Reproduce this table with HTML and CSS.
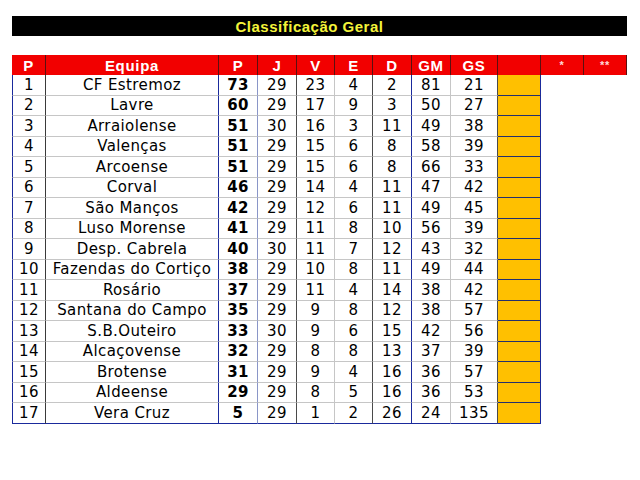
FILE: index.html
```html
<!DOCTYPE html>
<html lang="pt">
<head>
<meta charset="utf-8">
<title>Classificação Geral</title>
<link rel="stylesheet" href="styles.css">
</head>
<body>
<div class="page">
  <div class="title"><span>Classificação Geral</span></div>
  <div class="standings">
    <div class="row head">
      <div class="c">P</div><div class="c">Equipa</div><div class="c">P</div><div class="c">J</div><div class="c">V</div><div class="c">E</div><div class="c">D</div><div class="c">GM</div><div class="c">GS</div><div class="c"></div><div class="c star">*</div><div class="c star">**</div>
    </div>
    <div class="row"><div class="c">1</div><div class="c">CF Estremoz</div><div class="c pts">73</div><div class="c">29</div><div class="c">23</div><div class="c">4</div><div class="c">2</div><div class="c">81</div><div class="c">21</div><div class="c hl"></div><div class="c e"></div><div class="c e"></div></div>
    <div class="row"><div class="c">2</div><div class="c">Lavre</div><div class="c pts">60</div><div class="c">29</div><div class="c">17</div><div class="c">9</div><div class="c">3</div><div class="c">50</div><div class="c">27</div><div class="c hl"></div><div class="c e"></div><div class="c e"></div></div>
    <div class="row"><div class="c">3</div><div class="c">Arraiolense</div><div class="c pts">51</div><div class="c">30</div><div class="c">16</div><div class="c">3</div><div class="c">11</div><div class="c">49</div><div class="c">38</div><div class="c hl"></div><div class="c e"></div><div class="c e"></div></div>
    <div class="row"><div class="c">4</div><div class="c">Valenças</div><div class="c pts">51</div><div class="c">29</div><div class="c">15</div><div class="c">6</div><div class="c">8</div><div class="c">58</div><div class="c">39</div><div class="c hl"></div><div class="c e"></div><div class="c e"></div></div>
    <div class="row"><div class="c">5</div><div class="c">Arcoense</div><div class="c pts">51</div><div class="c">29</div><div class="c">15</div><div class="c">6</div><div class="c">8</div><div class="c">66</div><div class="c">33</div><div class="c hl"></div><div class="c e"></div><div class="c e"></div></div>
    <div class="row"><div class="c">6</div><div class="c">Corval</div><div class="c pts">46</div><div class="c">29</div><div class="c">14</div><div class="c">4</div><div class="c">11</div><div class="c">47</div><div class="c">42</div><div class="c hl"></div><div class="c e"></div><div class="c e"></div></div>
    <div class="row"><div class="c">7</div><div class="c">São Manços</div><div class="c pts">42</div><div class="c">29</div><div class="c">12</div><div class="c">6</div><div class="c">11</div><div class="c">49</div><div class="c">45</div><div class="c hl"></div><div class="c e"></div><div class="c e"></div></div>
    <div class="row"><div class="c">8</div><div class="c">Luso Morense</div><div class="c pts">41</div><div class="c">29</div><div class="c">11</div><div class="c">8</div><div class="c">10</div><div class="c">56</div><div class="c">39</div><div class="c hl"></div><div class="c e"></div><div class="c e"></div></div>
    <div class="row"><div class="c">9</div><div class="c">Desp. Cabrela</div><div class="c pts">40</div><div class="c">30</div><div class="c">11</div><div class="c">7</div><div class="c">12</div><div class="c">43</div><div class="c">32</div><div class="c hl"></div><div class="c e"></div><div class="c e"></div></div>
    <div class="row"><div class="c">10</div><div class="c">Fazendas do Cortiço</div><div class="c pts">38</div><div class="c">29</div><div class="c">10</div><div class="c">8</div><div class="c">11</div><div class="c">49</div><div class="c">44</div><div class="c hl"></div><div class="c e"></div><div class="c e"></div></div>
    <div class="row"><div class="c">11</div><div class="c">Rosário</div><div class="c pts">37</div><div class="c">29</div><div class="c">11</div><div class="c">4</div><div class="c">14</div><div class="c">38</div><div class="c">42</div><div class="c hl"></div><div class="c e"></div><div class="c e"></div></div>
    <div class="row"><div class="c">12</div><div class="c">Santana do Campo</div><div class="c pts">35</div><div class="c">29</div><div class="c">9</div><div class="c">8</div><div class="c">12</div><div class="c">38</div><div class="c">57</div><div class="c hl"></div><div class="c e"></div><div class="c e"></div></div>
    <div class="row"><div class="c">13</div><div class="c">S.B.Outeiro</div><div class="c pts">33</div><div class="c">30</div><div class="c">9</div><div class="c">6</div><div class="c">15</div><div class="c">42</div><div class="c">56</div><div class="c hl"></div><div class="c e"></div><div class="c e"></div></div>
    <div class="row"><div class="c">14</div><div class="c">Alcaçovense</div><div class="c pts">32</div><div class="c">29</div><div class="c">8</div><div class="c">8</div><div class="c">13</div><div class="c">37</div><div class="c">39</div><div class="c hl"></div><div class="c e"></div><div class="c e"></div></div>
    <div class="row"><div class="c">15</div><div class="c">Brotense</div><div class="c pts">31</div><div class="c">29</div><div class="c">9</div><div class="c">4</div><div class="c">16</div><div class="c">36</div><div class="c">57</div><div class="c hl"></div><div class="c e"></div><div class="c e"></div></div>
    <div class="row"><div class="c">16</div><div class="c">Aldeense</div><div class="c pts">29</div><div class="c">29</div><div class="c">8</div><div class="c">5</div><div class="c">16</div><div class="c">36</div><div class="c">53</div><div class="c hl"></div><div class="c e"></div><div class="c e"></div></div>
    <div class="row last"><div class="c">17</div><div class="c">Vera Cruz</div><div class="c pts">5</div><div class="c">29</div><div class="c">1</div><div class="c">2</div><div class="c">26</div><div class="c">24</div><div class="c">135</div><div class="c hl"></div><div class="c e"></div><div class="c e"></div></div>
  </div>
</div>
</body>
</html>
```
FILE: styles.css
```css
html, body {
  margin: 0;
  padding: 0;
  background: #ffffff;
}

.page {
  padding: 16px 0 0 12px;
  width: 615px;
}

.title {
  height: 20px;
  background: #000000;
  display: flex;
  align-items: center;
  justify-content: center;
  padding-right: 20px;
  box-sizing: border-box;
  font-family: "Liberation Sans", Arial, sans-serif;
  font-weight: bold;
  font-size: 15px;
  letter-spacing: 0.5px;
  color: #f4f43a;
}

.standings {
  margin-top: 19px;
}

.row {
  display: grid;
  grid-template-columns: 34px 173px 39px 39px 38px 38px 39px 39px 47px 43px 43px 43px;
  height: 20.5px;
}

.c {
  box-sizing: border-box;
  display: flex;
  align-items: center;
  justify-content: center;
  font-family: "DejaVu Sans", Verdana, sans-serif;
  font-size: 15px;
  letter-spacing: 0.4px;
  color: #000000;
  border-bottom: 1px solid #c6c6c6;
  border-right: 1px solid #c6c6c6;
  white-space: nowrap;
}

/* column separators */
.row .c:nth-child(1) { border-left: 1px solid #1a2a9c; border-right-color: #3a3a3a; }
.row .c:nth-child(2) { border-right-color: #1a2a9c; }
.row .c:nth-child(3) { border-right-color: #8a96c8; }
.row .c:nth-child(4) { border-right-color: #4a4a4a; }
.row .c:nth-child(5) { border-right-color: #c6c6c6; }
.row .c:nth-child(6) { border-right-color: #4a4a4a; }
.row .c:nth-child(7) { border-right-color: #1a2a9c; }
.row .c:nth-child(8) { border-right-color: #c6c6c6; }
.row .c:nth-child(9) { border-right-color: #4a4a4a; }

.pts {
  font-weight: bold;
}

.hl {
  background: #ffc000;
  border-bottom-color: #23306e;
  border-right-color: #1a2a9c !important;
}

.e {
  border: none;
}

.last .c {
  border-bottom-color: #1a2a9c;
}

.last .e {
  border: none;
}

/* header row */
.head {
  height: 20px;
}

.head .c {
  background: #f20000;
  color: #ffffff;
  font-family: "Liberation Sans", Arial, sans-serif;
  font-weight: bold;
  font-size: 15px;
  letter-spacing: 0.7px;
  border-bottom: none;
  border-right: 1px solid #5a1010 !important;
  border-left: none !important;
}

.head .star {
  font-size: 11px;
  color: #ffd8d8;
}
```
